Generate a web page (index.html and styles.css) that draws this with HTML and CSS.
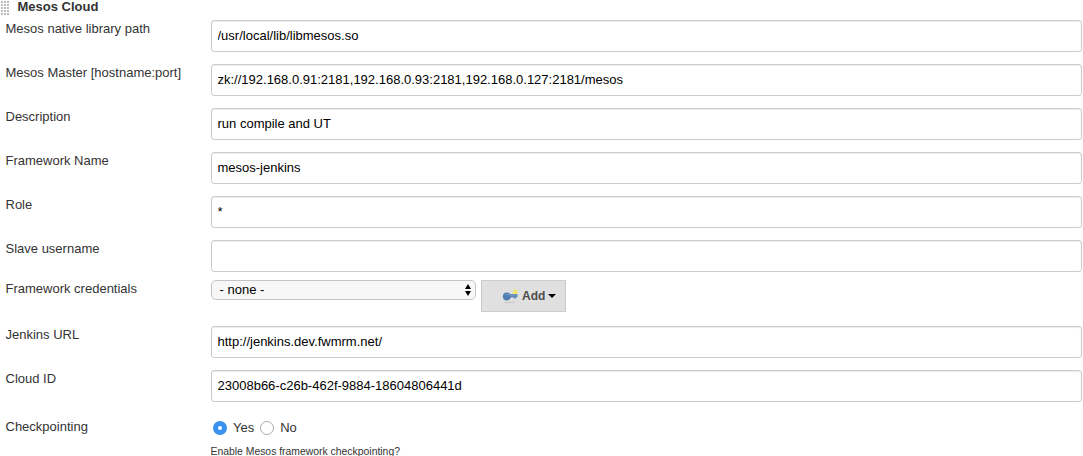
FILE: index.html
```html
<!DOCTYPE html>
<html lang="en">
<head>
    <meta charset="utf-8">
    <title>Mesos Cloud</title>
    <link rel="stylesheet" href="styles.css">
</head>
<body>
    <form class="config">
        <div class="section-header">
            <div class="dd-handle"></div>
            <b>Mesos Cloud</b>
        </div>

        <div class="row">
            <label class="name" for="lib">Mesos native library path</label>
            <input class="text" id="lib" type="text" value="/usr/local/lib/libmesos.so">
        </div>
        <div class="row">
            <label class="name" for="master">Mesos Master [hostname:port]</label>
            <input class="text" id="master" type="text" value="zk://192.168.0.91:2181,192.168.0.93:2181,192.168.0.127:2181/mesos">
        </div>
        <div class="row">
            <label class="name" for="desc">Description</label>
            <input class="text" id="desc" type="text" value="run compile and UT">
        </div>
        <div class="row">
            <label class="name" for="fw">Framework Name</label>
            <input class="text" id="fw" type="text" value="mesos-jenkins">
        </div>
        <div class="row">
            <label class="name" for="role">Role</label>
            <input class="text" id="role" type="text" value="*">
        </div>
        <div class="row row-slave">
            <label class="name" for="slave">Slave username</label>
            <input class="text" id="slave" type="text" value="">
        </div>

        <div class="row row-credentials">
            <span class="name">Framework credentials</span>
            <div class="select">
                <span>- none -</span>
                <svg width="6" height="12" viewBox="0 0 6 12"><path d="M3 0L6 5H0zM3 12L0 7h6z"/></svg>
            </div>
            <button class="add" type="button">
                <svg class="key" width="16" height="16" viewBox="0 0 16 16">
                    <ellipse cx="7.5" cy="14.4" rx="5.5" ry="0.9" fill="#cdcdcd"/>
                    <path d="M11.500 1l1.500.8L15 1.500l-.3 2L16 5l-2 1L11 6l-.6-1.600L12 3.200z" fill="#f3e565"/>
                    <path d="M7 6h8.500v3.200h-1.500v1.300h-2V9.500H7z" fill="#5f89b6"/>
                    <circle cx="4.800" cy="8.500" r="3.900" fill="#4e7db0"/>
                    <path d="M3 6.800q2-1.300 4.500.2H15" fill="none" stroke="#7ba0c8"/>
                </svg>
                <span>Add</span>
                <svg class="caret" width="8" height="4" viewBox="0 0 8 4"><path d="M0 0h8L4 4z"/></svg>
            </button>
        </div>

        <div class="row">
            <label class="name" for="url">Jenkins URL</label>
            <input class="text" id="url" type="text" value="http://jenkins.dev.fwmrm.net/">
        </div>
        <div class="row">
            <label class="name" for="cloud">Cloud ID</label>
            <input class="text" id="cloud" type="text" value="23008b66-c26b-462f-9884-18604806441d">
        </div>

        <div class="row row-checkpointing">
            <span class="name">Checkpointing</span>
            <div class="radios">
                <label><input type="radio" name="checkpoint" checked> Yes</label>
                <label><input type="radio" name="checkpoint"> No</label>
            </div>
        </div>
        <div class="help">Enable Mesos framework checkpointing?</div>
    </form>
</body>
</html>
```

FILE: styles.css
```css
html, body {
    margin: 0;
    height: 456px;
    overflow: hidden;
    background: #fff;
}

body, input, button {
    font-family: "Liberation Sans", Helvetica, Arial, sans-serif;
    font-size: 13px;
    color: #333;
}

.section-header {
    display: flex;
    height: 20px;
    line-height: 14px;
}

/* dotted drag handle */
.dd-handle {
    width: 10px;
    height: 16px;
    margin-right: 7.5px;
    background:
        linear-gradient(#fff 1px, transparent 1px) 0 0 / 3px 3px,
        linear-gradient(90deg, #fff 1px, #bbb 1px) 0 0 / 3px 3px;
}

.row {
    display: flex;
    align-items: flex-start;
    height: 44px;
}

.name {
    flex: none;
    width: 205.5px;
    padding-left: 5.5px;
    line-height: 18px;
}

.text {
    box-sizing: border-box;
    width: 871px;
    height: 32px;
    padding: 0 5.5px 2px;
    border: 1px solid #ccc;
    border-radius: 3px;
    box-shadow: inset 0 1px 1px rgba(0, 0, 0, 0.075);
    color: #000;
    outline: none;
}

.row-slave {
    height: 40px;
}

.row-credentials {
    height: 46px;
}

.select {
    box-sizing: border-box;
    display: flex;
    align-items: center;
    justify-content: space-between;
    width: 265px;
    height: 20px;
    margin-right: 5px;
    padding: 0 4px 0 7.5px;
    border: 1px solid #c4c4c4;
    border-radius: 5px;
    background: #f7f7f7;
    color: #000;
}

.select span {
    padding-bottom: 1px;
}

.add {
    box-sizing: border-box;
    display: flex;
    align-items: center;
    width: 85px;
    height: 32px;
    padding: 0 0 0 20px;
    border: 1px solid #ccc;
    background: #e0e0e0;
    color: #4d4d4d;
    font-size: 12px;
    font-weight: bold;
}

.key {
    margin-right: 4px;
}

.caret {
    margin-left: 3px;
}

.row-checkpointing {
    height: 30px;
    padding-top: 4px;
    box-sizing: border-box;
}

.radios {
    display: flex;
    gap: 6px;
    padding-left: 2px;
}

.radios label {
    display: flex;
    align-items: center;
    gap: 6px;
    height: 19px;
}

.radios input {
    appearance: none;
    box-sizing: border-box;
    width: 14px;
    height: 14px;
    margin: 1px 0 0;
    border: 1px solid #aaa;
    border-radius: 50%;
    background: #fff;
}

.radios input:checked {
    border: 5px solid #3b91ee;
}

.help {
    padding-left: 210.5px;
    font-size: 10.4px;
    line-height: 16px;
}
```
